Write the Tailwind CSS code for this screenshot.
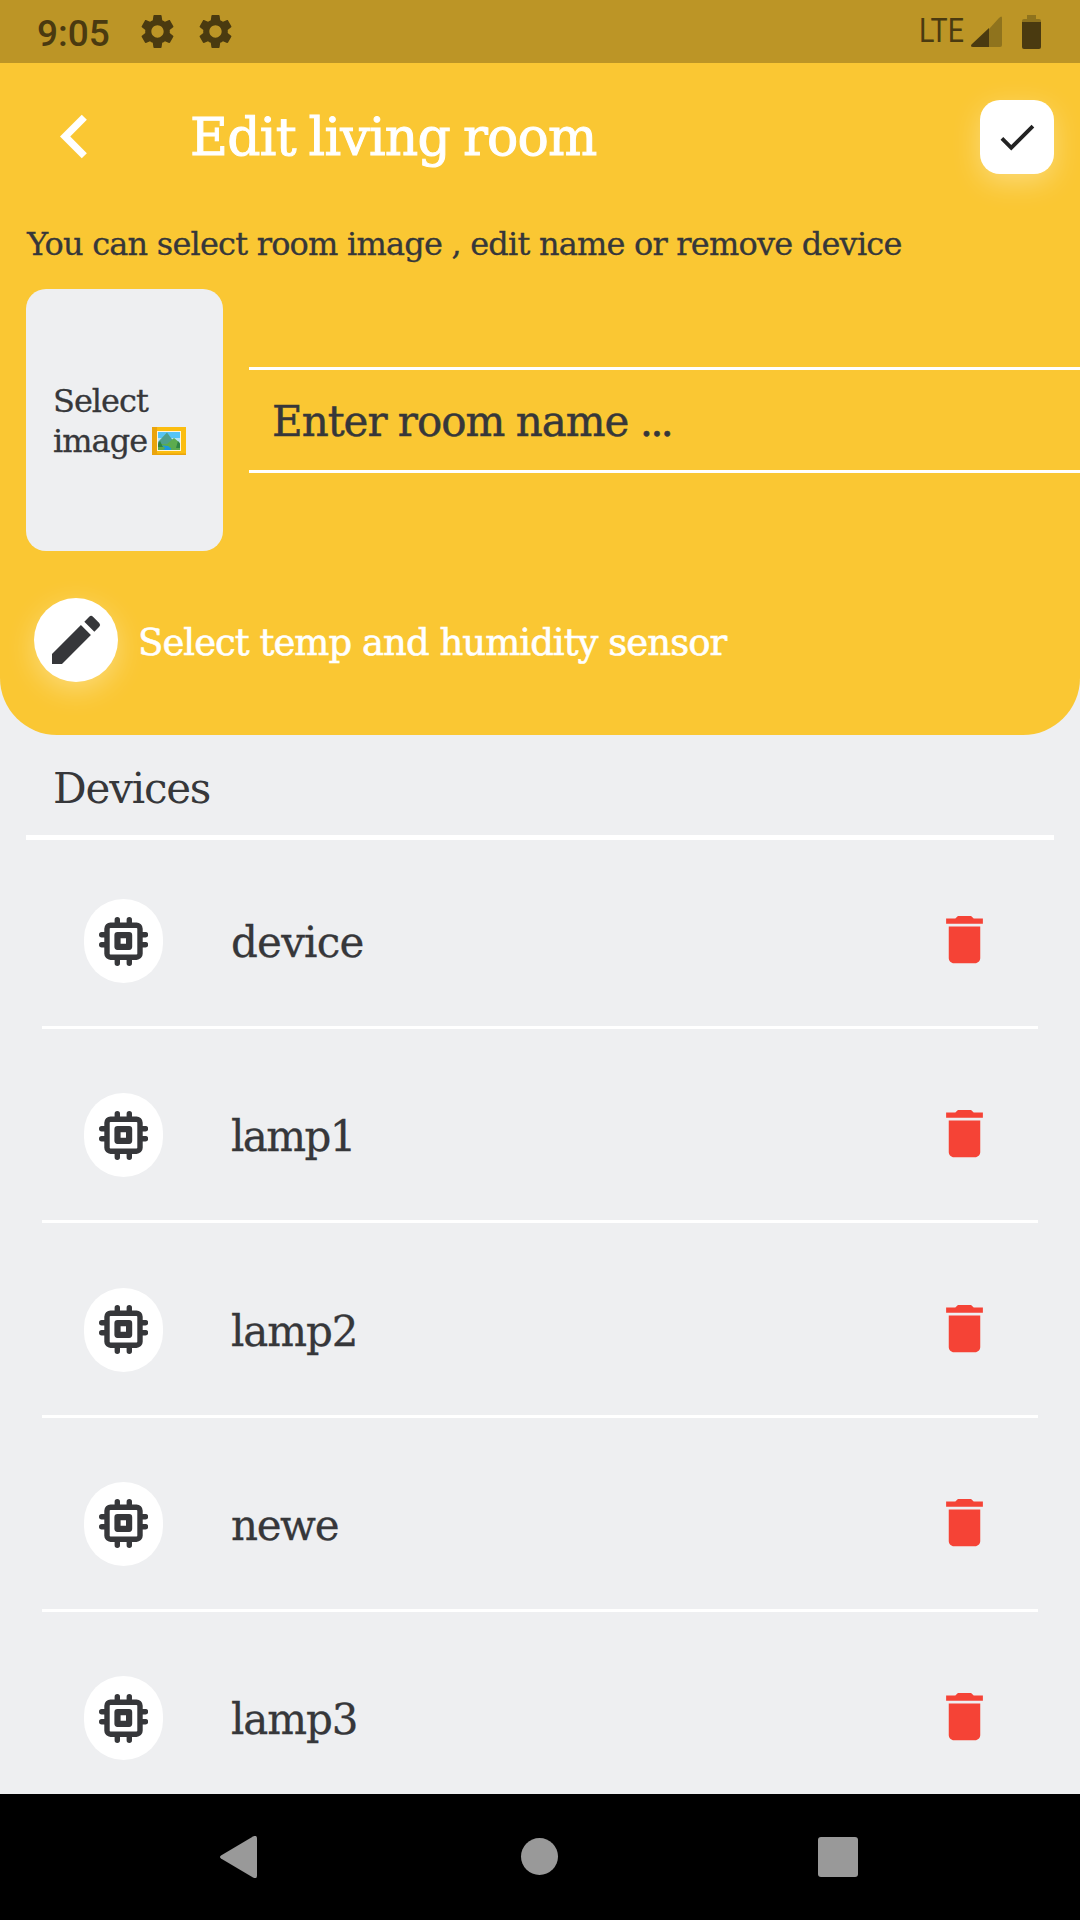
<!DOCTYPE html>
<html lang="en">
<head>
<meta charset="utf-8">
<title>Edit living room</title>
<script src="https://cdn.jsdelivr.net/npm/@tailwindcss/browser@4"></script>
</head>
<body class="flex h-[1920px] w-[1080px] flex-col overflow-hidden bg-[#eeeff1] font-['DejaVu_Serif',serif] text-[#36373a]">
<svg class="hidden">
  <symbol id="gear" viewBox="0 0 24 24"><path fill="currentColor" d="M19.14 12.94c.04-.3.06-.61.06-.94 0-.32-.02-.64-.07-.94l2.03-1.58c.18-.14.23-.41.12-.61l-1.92-3.32c-.12-.22-.37-.29-.59-.22l-2.39.96c-.5-.38-1.03-.7-1.62-.94l-.36-2.54c-.04-.24-.24-.41-.48-.41h-3.84c-.24 0-.43.17-.47.41l-.36 2.54c-.59.24-1.13.57-1.62.94l-2.39-.96c-.22-.08-.47 0-.59.22L2.74 8.87c-.12.21-.08.47.12.61l2.03 1.58c-.05.3-.09.63-.09.94s.02.64.07.94l-2.03 1.58c-.18.14-.23.41-.12.61l1.92 3.32c.12.22.37.29.59.22l2.39-.96c.5.38 1.03.7 1.62.94l.36 2.54c.05.24.24.41.48.41h3.84c.24 0 .44-.17.47-.41l.36-2.54c.59-.24 1.13-.56 1.62-.94l2.39.96c.22.08.47 0 .59-.22l1.92-3.32c.12-.22.07-.47-.12-.61l-2.01-1.58zM12 15.6c-1.98 0-3.6-1.62-3.6-3.6s1.62-3.6 3.6-3.6 3.6 1.62 3.6 3.6-1.62 3.6-3.6 3.6z"/></symbol>
  <symbol id="chip" viewBox="0 0 49 49">
    <g fill="none" stroke="currentColor">
      <rect x="8" y="8.2" width="33" height="32" rx="3.5" stroke-width="5.4"/>
      <rect x="18.500" y="18.200" width="11.600" height="11.600" stroke-width="6.2" stroke-linejoin="round"/>
      <path stroke-width="5.4" stroke-linecap="round" d="M18.3 2.700v4M30.3 2.700v4M18.3 42v4.3M30.3 42v4.3M2.700 17.8h4M2.700 27.8h4M42.5 17.8h4M42.5 27.8h4"/>
    </g>
  </symbol>
  <symbol id="trash" viewBox="0 0 24 24"><path fill="currentColor" d="M6 19c0 1.1.9 2 2 2h8c1.1 0 2-.9 2-2V7H6v12zM19 4h-3.5l-1-1h-5l-1 1H5v2h14V4z"/></symbol>
</svg>

<!-- Status bar -->
<div class="flex h-[63px] shrink-0 items-center bg-[#bc9526] pl-[37px] pr-[39px] font-[Roboto,sans-serif] text-[#4a3a10]">
  <span class="w-[100px] pt-[3px] text-[37px] font-medium leading-none">9:05</span>
  <svg class="size-[41px]"><use href="#gear"/></svg>
  <svg class="ml-[17px] size-[41px]"><use href="#gear"/></svg>
  <span class="ml-auto mr-[8px] w-[44px] origin-left scale-x-88 text-[32.5px] leading-none">LTE</span>
  <svg class="h-[34px] w-[31px]" viewBox="0 0 31 34"><path fill="#8f731d" d="M31 3v27q0 2-2 2H18V14L28 3q3-3 3 0z"/><path fill="currentColor" d="M18 13v19H2q-3 0-1.500-2.500z"/></svg>
  <svg class="ml-5 h-[34px] w-[19px]" viewBox="0 0 19 34"><path fill="#8f731d" d="M5 0h9v4h3q2 0 2 2v2H0V6q0-2 2-2h3z"/><path fill="currentColor" d="M0 7h19v25q0 2-2 2H2q-2 0-2-2z"/></svg>
</div>

<!-- Header panel -->
<header class="h-[672px] shrink-0 rounded-b-[57px] bg-[#fac733]">
  <div class="flex h-[147px] items-center pl-[31px] pr-[26px]">
    <svg class="size-[87px]" viewBox="0 0 24 24"><path fill="#fff" d="M15.41 7.410 14 6l-6 6 6 6 1.410-1.410L10.830 12z"/></svg>
    <h1 class="ml-[72px] text-[52px] leading-none tracking-[-0.75px] text-white [word-spacing:-3px] [-webkit-text-stroke:1px_white]">Edit living room</h1>
    <button class="ml-auto flex size-[74px] items-center justify-center rounded-[20px] bg-white text-[#222] shadow-[0_8px_28px_rgba(255,255,255,0.35)]">
      <svg class="size-[46px]" viewBox="0 0 24 24"><path fill="currentColor" d="M9 16.170L4.830 12l-1.420 1.410L9 19 21 7l-1.410-1.410z"/></svg>
    </button>
  </div>
  <p class="mb-[12px] h-[67px] whitespace-nowrap pl-[27px] text-[32px] leading-[69px] tracking-[-0.8px] [-webkit-text-stroke:0.3px]">You can select room image , edit name or remove device</p>
  <div class="flex h-[262px] items-center pl-[26px]">
    <div class="flex h-full w-[197px] flex-col justify-center rounded-[20px] bg-[#eeeff1] pl-[27px] pt-[2px] text-[32px] leading-[40px] tracking-[-1px] [-webkit-text-stroke:0.3px]">
      <span>Select</span>
      <span class="flex items-center">image
        <svg class="ml-[5px] h-[28px] w-[34px]" viewBox="0 0 34 28"><path fill="#fbbd10" d="M0 0h34v28H0z"/><path fill="#eaa40c" d="M0 0h5v28H0zM0 26.500h34V28H0z"/><path fill="#fff5dc" d="M5 4h24v20H5z"/><path fill="#56c4f5" d="M6 5h22v18H6z"/><path fill="#b5e4f5" d="M6 11h22v6H6z"/><path fill="#4f9f8b" d="m6 15 9-9.500L22 15l-4 5H6z"/><path fill="#5cab4e" d="m15 17 7-6 6 5v7H6v-6z"/><path fill="#2f8444" d="m8 14 3 6H6v-3zM26 14l2 3v4h-4z"/><path fill="#1b98de" d="M10 18.500q8 0 7.500 2 3 .5 1 2.500H11q4-2 0-3.500z"/></svg>
      </span>
    </div>
    <div class="ml-[26px] flex h-[106px] flex-1 items-center border-y-[3px] border-white pl-[23px] pt-[4px] text-[42px] leading-none tracking-[-1px] [word-spacing:-1px] [-webkit-text-stroke:0.5px]"><span>Enter room name <span class="tracking-[-3px]">...</span></span></div>
  </div>
  <div class="mt-[47px] flex items-center pl-[34px]">
    <button class="flex size-[84px] items-center justify-center rounded-full bg-white shadow-[0_8px_28px_rgba(255,255,255,0.35)]">
      <svg class="size-[64px]" viewBox="0 0 24 24"><path fill="currentColor" d="M3 17.250V21h3.750L17.600 10.150l-3.750-3.750zM20.710 7.040a1 1 0 0 0 0-1.410l-2.340-2.340a1 1 0 0 0-1.410 0L15.130 5.120l3.750 3.750z"/></svg>
    </button>
    <span class="ml-[20px] pt-[5px] text-[37px] leading-none tracking-[-0.97px] text-white [-webkit-text-stroke:0.6px_white]">Select temp and humidity sensor</span>
  </div>
</header>

<!-- Device list -->
<main class="min-h-0 flex-1 overflow-hidden">
  <h2 class="mx-[26px] flex h-[105px] items-center border-b-[5px] border-white pl-[27px] pt-[8px] text-[42px] leading-none tracking-[-1.2px]">Devices</h2>
  <ul class="px-[42px]">
    <li class="flex h-[189px] items-end border-b-[3px] border-white px-[42px] pb-[43px]">
      <span class="flex h-[84px] w-[79px] items-center justify-center rounded-[40px] bg-white"><svg class="size-[49px]"><use href="#chip"/></svg></span>
      <span class="ml-[68px] text-[42px] leading-[81px] tracking-[-0.8px] [-webkit-text-stroke:0.3px]">device</span>
      <svg class="mb-[12px] ml-auto size-[63px] text-[#f54336]"><use href="#trash"/></svg>
    </li>
    <li class="flex h-[194.25px] items-end border-b-[3px] border-white px-[42px] pb-[43px]">
      <span class="flex h-[84px] w-[79px] items-center justify-center rounded-[40px] bg-white"><svg class="size-[49px]"><use href="#chip"/></svg></span>
      <span class="ml-[68px] text-[42px] leading-[81px] tracking-[-1.6px] [-webkit-text-stroke:0.3px]">lamp1</span>
      <svg class="mb-[12px] ml-auto size-[63px] text-[#f54336]"><use href="#trash"/></svg>
    </li>
    <li class="flex h-[194.25px] items-end border-b-[3px] border-white px-[42px] pb-[43px]">
      <span class="flex h-[84px] w-[79px] items-center justify-center rounded-[40px] bg-white"><svg class="size-[49px]"><use href="#chip"/></svg></span>
      <span class="ml-[68px] text-[42px] leading-[81px] tracking-[-1.1px] [-webkit-text-stroke:0.3px]">lamp2</span>
      <svg class="mb-[12px] ml-auto size-[63px] text-[#f54336]"><use href="#trash"/></svg>
    </li>
    <li class="flex h-[194.25px] items-end border-b-[3px] border-white px-[42px] pb-[43px]">
      <span class="flex h-[84px] w-[79px] items-center justify-center rounded-[40px] bg-white"><svg class="size-[49px]"><use href="#chip"/></svg></span>
      <span class="ml-[68px] text-[42px] leading-[81px] tracking-[-1.4px] [-webkit-text-stroke:0.3px]">newe</span>
      <svg class="mb-[12px] ml-auto size-[63px] text-[#f54336]"><use href="#trash"/></svg>
    </li>
    <li class="flex h-[194.25px] items-end border-b-[3px] border-white px-[42px] pb-[43px]">
      <span class="flex h-[84px] w-[79px] items-center justify-center rounded-[40px] bg-white"><svg class="size-[49px]"><use href="#chip"/></svg></span>
      <span class="ml-[68px] text-[42px] leading-[81px] tracking-[-1.1px] [-webkit-text-stroke:0.3px]">lamp3</span>
      <svg class="mb-[12px] ml-auto size-[63px] text-[#f54336]"><use href="#trash"/></svg>
    </li>
  </ul>
</main>

<!-- System navigation -->
<nav class="flex h-[126px] shrink-0 items-center justify-between bg-black pl-[220px] pr-[222px]">
  <svg class="h-[42px] w-[37px]" viewBox="0 0 37 42"><path fill="#999" d="M1 19.500 33 .5q4-2 4 2v37q0 4-4 2L1 22.500q-2-1.500 0-3z"/></svg>
  <span class="mb-px ml-[3px] size-[37px] rounded-full bg-[#999]"></span>
  <span class="size-[40px] rounded-[3px] bg-[#999]"></span>
</nav>
</body>
</html>
